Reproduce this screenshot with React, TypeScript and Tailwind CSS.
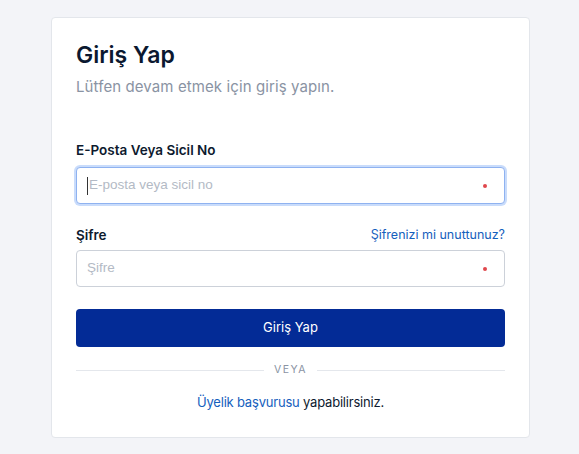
import React from "react";

function Field({ placeholder, focused }: { placeholder: string; focused?: boolean }) {
  return (
    <div
      className={
        "relative flex h-[37px] items-center rounded-[4px] border bg-white px-[10px] " +
        (focused
          ? "border-[#8fb2f0] shadow-[0_0_0_2px_#c9dcfb]"
          : "border-[#ccd1d9]")
      }
    >
      {focused && <span className="mr-[1px] h-[18px] w-px bg-[#333]" />}
      <span
        className="flex-1 text-[13.5px] text-[#b3bac5]"
        style={{ fontFamily: "'Liberation Sans', Arial, sans-serif" }}
      >
        {placeholder}
      </span>
      <span className="mr-[7px] h-[4px] w-[4px] rounded-full bg-[#e0474c]" />
    </div>
  );
}

export default function App() {
  return (
    <div
      className="min-h-[454px] w-full bg-[#f3f4f8] pt-[17px]"
      style={{ fontFamily: "Inter, 'Noto Sans', sans-serif" }}
    >
      <div className="ml-[51px] w-[479px] rounded-[4px] border border-[#e3e6eb] bg-white px-6 pb-[25px] pt-[21px]">
        <h1 className="text-[23px] font-semibold leading-[32px] text-[#0b1830]">Giriş Yap</h1>
        <p className="mt-[5px] text-[15px] tracking-[0.1px] leading-[22px] text-[#8a93a3]">
          Lütfen devam etmek için giriş yapın.
        </p>

        <label className="mt-[42px] block text-[13.5px] font-semibold leading-[20px] text-[#0d1a2e]">
          E-Posta Veya Sicil No
        </label>
        <div className="mt-[7px]">
          <Field placeholder="E-posta veya sicil no" focused />
        </div>

        <div className="mt-[21px] flex items-center justify-between">
          <label className="text-[13.5px] font-semibold leading-[20px] text-[#0d1a2e]">Şifre</label>
          <span className="text-[12.5px] leading-[20px] text-[#1560bd]">Şifrenizi mi unuttunuz?</span>
        </div>
        <div className="mt-[5px]">
          <Field placeholder="Şifre" />
        </div>

        <button className="mt-[22px] flex h-[38px] w-full items-center justify-center rounded-[4px] bg-[#032b96] text-[13px] text-white">
          Giriş Yap
        </button>

        <div className="mt-[15px] flex items-center gap-[10px]">
          <div className="h-px flex-1 bg-[#e4e7ec]" />
          <span className="text-[10.5px] tracking-[1.5px] leading-[16px] text-[#8a93a3]">VEYA</span>
          <div className="h-px flex-1 bg-[#e4e7ec]" />
        </div>

        <p className="mt-[14px] text-center text-[13px] tracking-[-0.2px] leading-[20px] text-[#0d1a2e]">
          <span className="text-[#1560bd]">Üyelik başvurusu</span> yapabilirsiniz.
        </p>
      </div>
    </div>
  );
}
